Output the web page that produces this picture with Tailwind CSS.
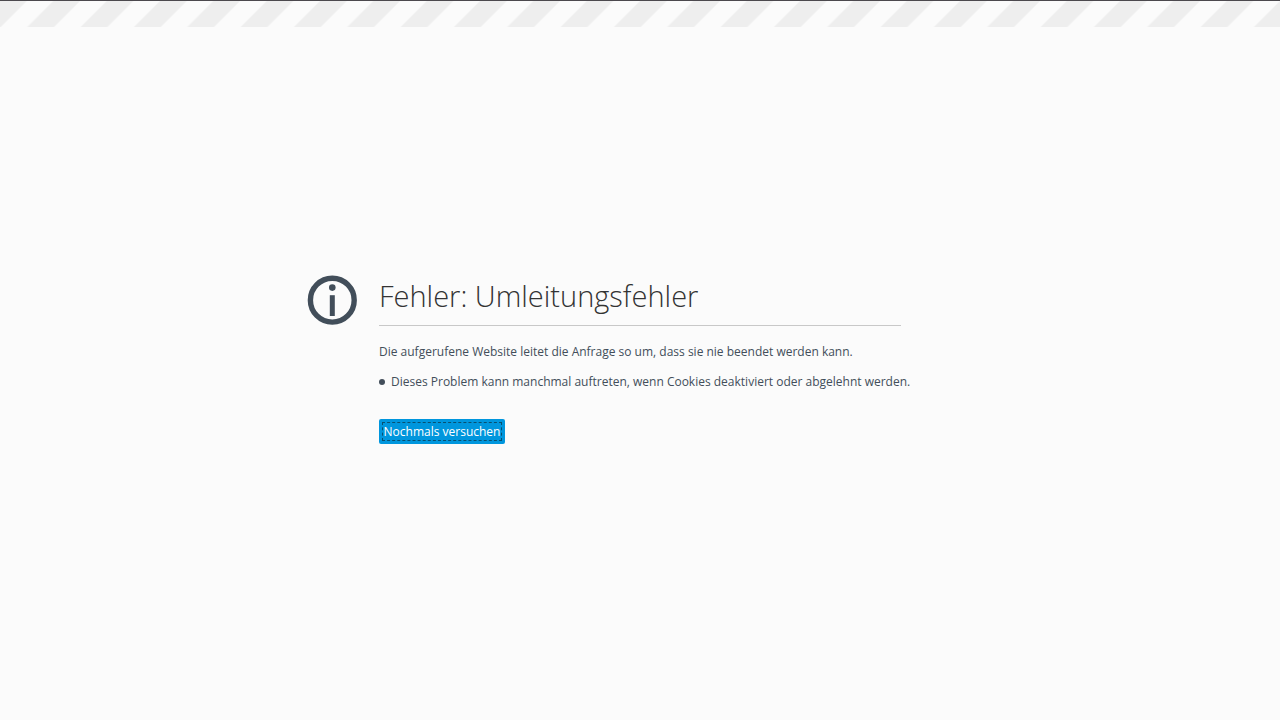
<!DOCTYPE html>
<html lang="de">
<head>
  <meta charset="UTF-8" />
  <meta name="viewport" content="width=device-width, initial-scale=1.0" />
  <title>Fehler: Umleitungsfehler</title>
  <script src="https://cdn.jsdelivr.net/npm/@tailwindcss/browser@4"></script>
</head>
<body class="min-h-screen flex flex-col bg-[#fbfbfb] text-[#424e5a] text-[12px] leading-[22px] font-['Open_Sans','Noto_Sans',sans-serif]">
  <header class="border-t border-[#4c494e]">
    <svg class="block w-full h-[26px]" aria-hidden="true">
      <defs>
        <pattern id="stripes" width="53.333" height="26.667" patternUnits="userSpaceOnUse">
          <path d="M0 0H26.667L0 26.667ZM53.333 0V26.667H26.667Z" fill="#eeeeee" />
        </pattern>
      </defs>
      <rect width="100%" height="100%" fill="url(#stripes)" />
    </svg>
  </header>

  <main class="flex-1 flex items-center justify-center pb-[28px]">
    <div class="flex items-start w-full max-w-[666px] pr-[72px]">
      <svg class="shrink-0 w-[50px] h-[50px] mr-[22px]" viewBox="0 0 50 50" fill="#424e5a" aria-hidden="true">
        <circle cx="25.3" cy="25.2" r="21.9" fill="none" stroke="#424e5a" stroke-width="5.4" />
        <circle cx="25.3" cy="12.6" r="3.3" />
        <rect x="22.8" y="20.2" width="5" height="20.8" />
      </svg>

      <div class="flex-1 min-w-0">
        <h1 class="h-[51px] border-b border-[#c8c8c8] text-[29px] leading-[42px] font-light text-[#333333]">Fehler: Umleitungsfehler</h1>
        <p class="mt-[15px]">Die aufgerufene Website leitet die Anfrage so um, dass sie nie beendet werden kann.</p>
        <ul class="mt-2 whitespace-nowrap">
          <li class="flex items-center gap-[6px] before:size-[6px] before:shrink-0 before:rounded-full before:bg-[#424e5a]">Dieses Problem kann manchmal auftreten, wenn Cookies deaktiviert oder abgelehnt werden.</li>
        </ul>
        <button type="button" class="mt-[26px] block w-[126px] h-[25px] p-[3px] rounded-[2px] bg-[#0096dd] text-white whitespace-nowrap">
          <span class="flex items-center justify-center h-full border border-dashed border-[#08506f]">Nochmals versuchen</span>
        </button>
      </div>
    </div>
  </main>
</body>
</html>
